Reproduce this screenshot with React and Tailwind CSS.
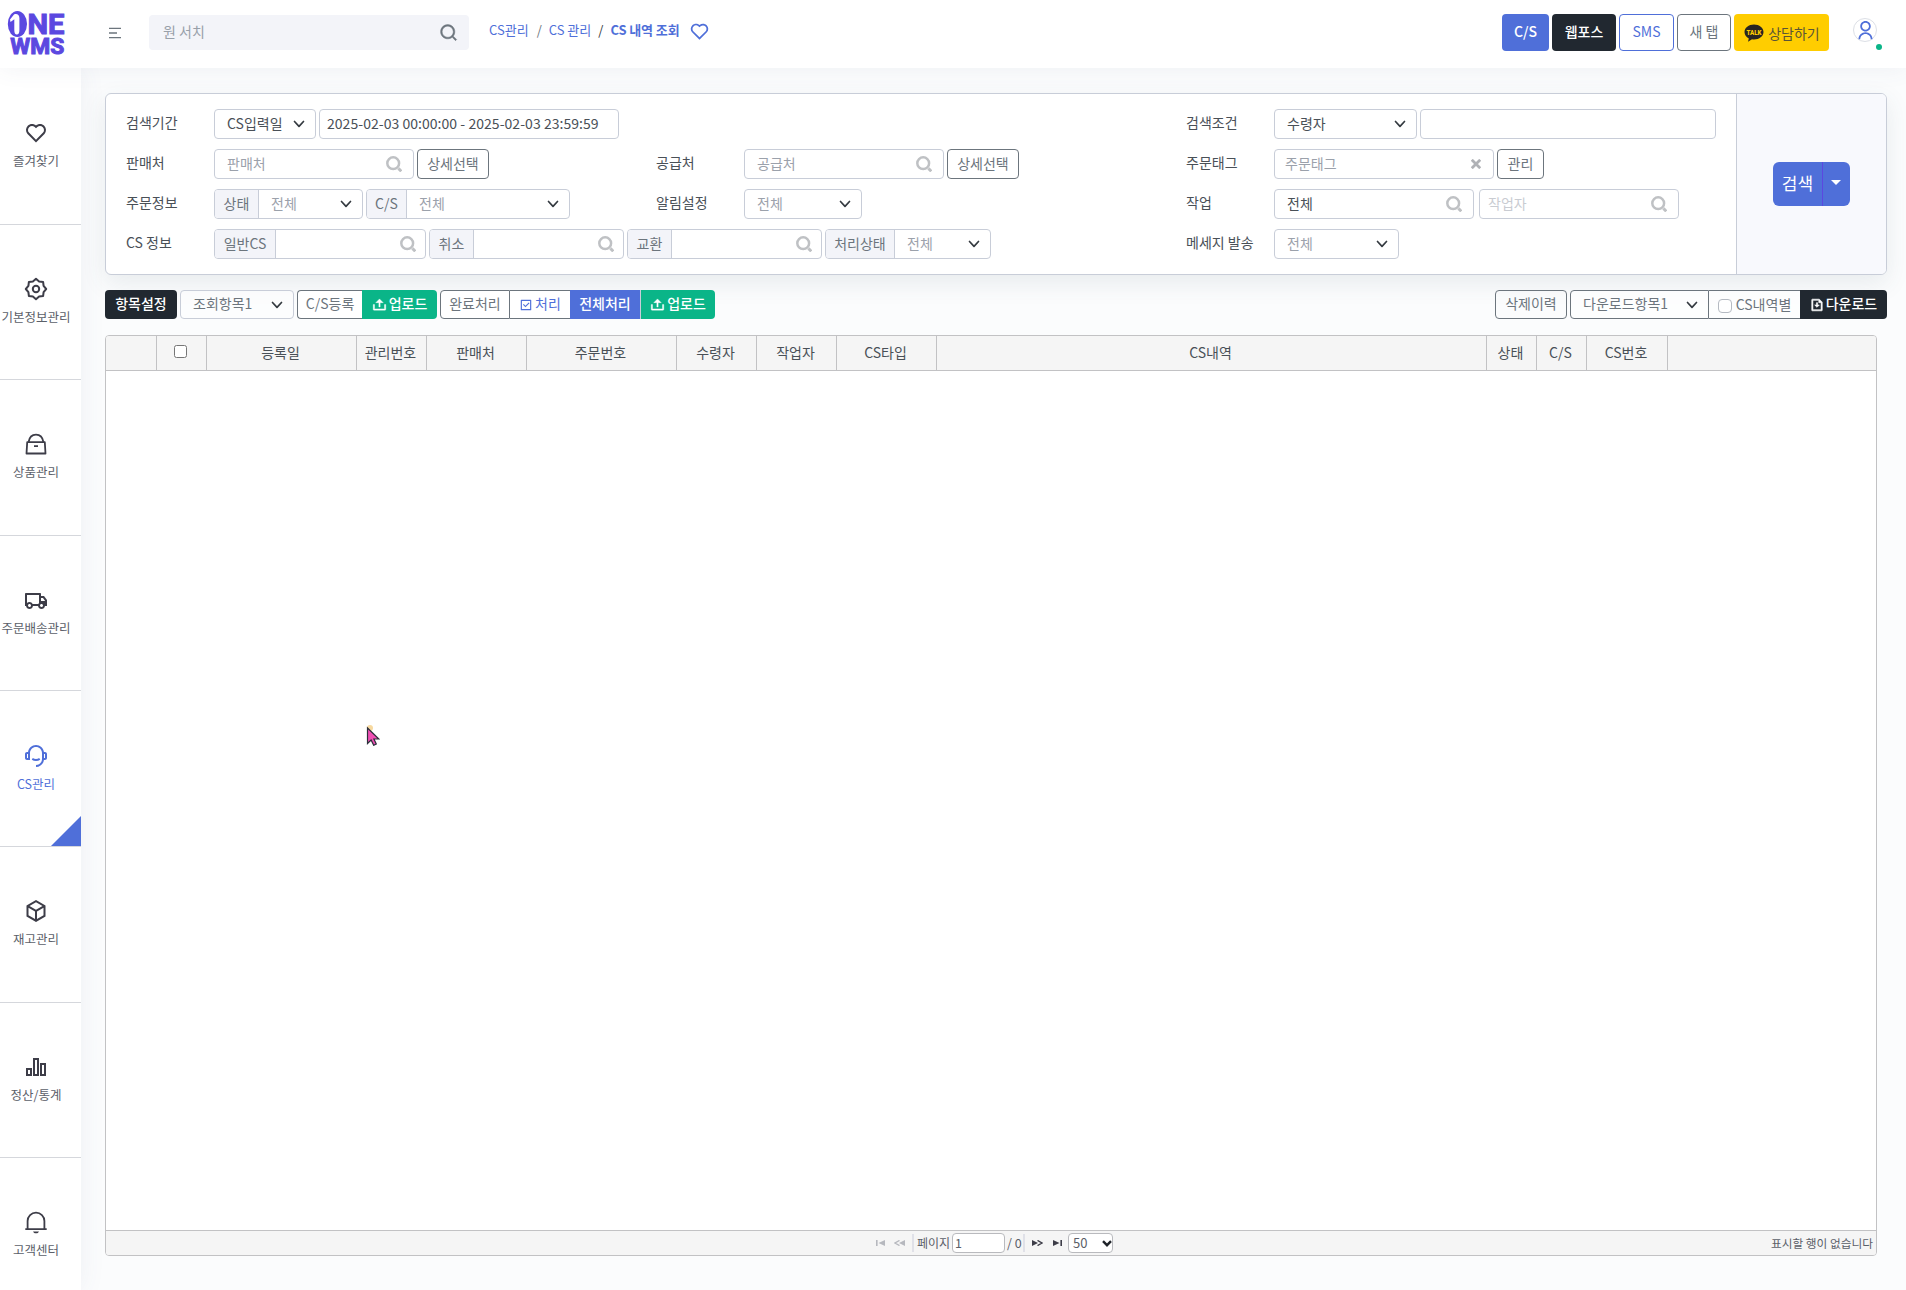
import clsx from "clsx";
import {
  RiBarChart2Line,
  RiBox3Line,
  RiCheckboxLine,
  RiCustomerService2Line,
  RiFileDownloadLine,
  RiHeartLine,
  RiMenu2Line,
  RiSearchLine,
  RiTruckLine,
  RiUpload2Line,
  RiUserLine,
} from "react-icons/ri";

function GearIcon({ className }) {
  return (
    <svg viewBox="0 0 24 24" className={className} fill="none" stroke="currentColor" strokeWidth="2" strokeLinejoin="round">
      <path d="M12 1.800 15.100 4.400l4 .5.500 4L22.200 12l-2.600 3.100-.5 4-4 .5L12 22.200l-3.100-2.600-4-.5-.5-4L1.800 12l2.600-3.100.5-4 4-.5z" />
      <circle cx="12" cy="12" r="3.200" />
    </svg>
  );
}

function BagIcon({ className }) {
  return (
    <svg viewBox="0 0 24 24" className={className} fill="none" stroke="currentColor" strokeWidth="1.800">
      <path d="M3.200 10.200h17.600l.7 11.300h-19z" strokeLinejoin="round" />
      <path d="M4.600 10C5.300 5.500 8.200 2.600 12 2.600s6.700 2.900 7.400 7.400M10 14.200h4" />
    </svg>
  );
}

function BellIcon({ className }) {
  return (
    <svg viewBox="0 0 24 24" className={className} fill="none" stroke="currentColor" strokeWidth="1.800">
      <path d="M3.600 18.700V11a8.400 8.400 0 0 1 16.800 0v7.700M1.300 19.200h21.400" />
      <path d="M9 21.400h6c-.6 1.300-1.600 1.900-3 1.900s-2.400-.6-3-1.900z" fill="currentColor" stroke="none" />
    </svg>
  );
}

const menus = [
  { name: "즐겨찾기", icon: RiHeartLine },
  { name: "기본정보관리", icon: GearIcon },
  { name: "상품관리", icon: BagIcon },
  { name: "주문배송관리", icon: RiTruckLine },
  { name: "CS관리", icon: RiCustomerService2Line, active: true },
  { name: "재고관리", icon: RiBox3Line },
  { name: "정산/통계", icon: RiBarChart2Line },
  { name: "고객센터", icon: BellIcon },
];

const columns = [
  { name: "", width: "w-[51px]" },
  { name: "check", width: "w-[50px]" },
  { name: "등록일", width: "w-[150px]" },
  { name: "관리번호", width: "w-[70px]" },
  { name: "판매처", width: "w-[100px]" },
  { name: "주문번호", width: "w-[150px]" },
  { name: "수령자", width: "w-[80px]" },
  { name: "작업자", width: "w-[80px]" },
  { name: "CS타입", width: "w-[100px]" },
  { name: "CS내역", width: "w-[550px]" },
  { name: "상태", width: "w-[50px]" },
  { name: "C/S", width: "w-[50px]" },
  { name: "CS번호", width: "w-[81px]" },
];

function Logo() {
  return (
    <svg width="60" height="48" viewBox="0 0 60 48" className="shrink-0 overflow-visible">
      <ellipse cx="11.400" cy="14" rx="9.600" ry="13" fill="#5b48e0" />
      <path
        d="M4 9.500 8 4.600c2.600-1.400 5.400.2 5.400 3.400v12c0 3-.9 4.600-2.600 4.600-1.600 0-2.500-1.600-2.500-4.600V9.200L4.500 12z"
        fill="#fff"
      />
      <g
        fill="#5b48e0"
        stroke="#5b48e0"
        strokeWidth="1"
        fontFamily="Roboto, 'Liberation Sans', sans-serif"
        fontWeight="700"
      >
        <text x="21.500" y="23.500" fontSize="28.500" textLength="37" lengthAdjust="spacingAndGlyphs">
          NE
        </text>
        <text x="4.300" y="44" fontSize="22.500" textLength="54" lengthAdjust="spacingAndGlyphs">
          WMS
        </text>
      </g>
    </svg>
  );
}

function Chevron({ className }) {
  return (
    <svg
      viewBox="0 0 12 8"
      className={clsx("h-2 w-3 shrink-0 text-[#343a40]", className)}
      fill="none"
      stroke="currentColor"
      strokeWidth="1.700"
      strokeLinecap="round"
      strokeLinejoin="round"
    >
      <path d="M1.500 1.500 6 6.300l4.500-4.800" />
    </svg>
  );
}

function FieldSearchIcon() {
  return (
    <svg viewBox="0 0 16 16" className="-mr-px ml-auto h-4 w-4 shrink-0 text-[#bfc1c4]" fill="none" stroke="currentColor">
      <circle cx="7.200" cy="7.200" r="5.900" strokeWidth="2.500" />
      <path d="m12.400 12.400 2.900 2.900" strokeWidth="3" />
    </svg>
  );
}

function Select({ value, width, dark }) {
  return (
    <div
      className={clsx(
        "flex h-[30px] items-center justify-between rounded border border-[#c8cdd8] bg-white pr-[10px] pl-3",
        dark ? "text-[#495057]" : "text-[#9ba1ab]",
        width,
      )}
    >
      <span className="pb-0.5 whitespace-nowrap">{value}</span>
      <Chevron />
    </div>
  );
}

function SearchInput({ value, width, className }) {
  return (
    <div
      className={clsx(
        "flex h-[30px] items-center rounded border border-[#c8cdd8] bg-white pr-3 pl-3 whitespace-nowrap text-[#9ba1ab]",
        width,
        className,
      )}
    >
      <span className="pb-0.5">{value}</span>
      <FieldSearchIcon />
    </div>
  );
}

function OutlineButton({ children, width }) {
  return (
    <button
      className={clsx(
        "flex h-[30px] items-center justify-center rounded border border-[#6c757d] bg-white pb-0.5 text-[#6c757d]",
        width,
      )}
    >
      {children}
    </button>
  );
}

function Group({ tag, tagWidth, width, children }) {
  return (
    <div className={clsx("flex h-[30px] overflow-hidden rounded border border-[#c8cdd8] bg-white", width)}>
      <span
        className={clsx(
          "flex shrink-0 items-center justify-center border-r border-[#c8cdd8] bg-[#f3f4f9] pb-0.5 whitespace-nowrap text-[#6c757d]",
          tagWidth,
        )}
      >
        {tag}
      </span>
      <div className="flex flex-1 items-center justify-between pr-[10px] pl-3 text-[#9ba1ab]">{children}</div>
    </div>
  );
}

function Row({ label, children }) {
  return (
    <div className="flex h-[30px] items-center">
      <span className="w-[88px] shrink-0 pb-1 whitespace-nowrap">{label}</span>
      <div className="flex gap-[3px]">{children}</div>
    </div>
  );
}

function Header() {
  return (
    <header className="relative z-20 flex h-[68px] shrink-0 items-start bg-white shadow-[0_0_24px_rgba(80,90,130,0.08)]">
      <div className="flex w-[107px] pt-[10px] pl-[6px]">
        <Logo />
      </div>
      <RiMenu2Line className="mt-[25px] h-4 w-4 text-[#6c757d]" />
      <div className="mt-[15px] ml-[26px] flex h-[35px] w-80 items-center justify-between rounded bg-[#f3f4f9] pr-[11px] pl-[14px] text-[#98a0aa]">
        <span className="pb-1">원 서치</span>
        <RiSearchLine className="h-[19px] w-[19px] text-[#6c757d]" stroke="currentColor" strokeWidth=".6" />
      </div>
      <div className="mt-5 ml-5 flex h-5 items-center text-[13px] whitespace-nowrap text-[#4f6fd9]">
        <span>CS관리</span>
        <span className="mr-[7px] ml-2 text-[#6c757d]">/</span>
        <span>CS 관리</span>
        <span className="mx-[7px] text-[#343a40]">/</span>
        <span className="font-bold tracking-[-0.1px]">CS 내역 조회</span>
        <RiHeartLine className="mt-0.5 ml-[9px] h-[21px] w-[21px]" />
      </div>
      <div className="mt-[14px] ml-auto flex h-[37px] gap-[3px] text-[14px]">
        <button className="w-[47px] rounded bg-[#4f6fd9] pb-[3px] font-medium text-white">C/S</button>
        <button className="w-16 rounded bg-[#212830] pb-[3px] font-medium text-white">웹포스</button>
        <button className="w-[55px] rounded border border-[#4f6fd9] pb-[3px] text-[#4f6fd9]">SMS</button>
        <button className="w-[54px] rounded border border-[#6c757d] pb-[3px] text-[#6c757d]">새 탭</button>
        <button className="flex w-[95px] items-center justify-center gap-1 rounded bg-[#ffcd00] pl-px text-[#5a5437]">
          <svg width="20" height="18" viewBox="0 0 20 18">
            <path
              d="M10 .5c5.300 0 9.500 3.300 9.500 7.500s-4.200 7.500-9.500 7.500c-.7 0-1.400 0-2-.2L4 17.800l.8-3.400C2.200 13.100.5 10.700.5 8 .5 3.800 4.700.5 10 .5z"
              fill="#272522"
            />
            <text
              x="2.500"
              y="10.500"
              fontSize="6.500"
              fontWeight="900"
              fontFamily="Roboto, sans-serif"
              fill="#ffcd00"
              textLength="15"
              lengthAdjust="spacingAndGlyphs"
            >
              TALK
            </text>
          </svg>
          <span>상담하기</span>
        </button>
      </div>
      <div className="relative mt-[18px] mr-[29px] ml-6 flex h-6 w-6 items-center justify-center rounded-full border border-[#dcdfe6]">
        <RiUserLine className="h-[21px] w-[21px] shrink-0 text-[#4f6fd9]" />
        <span className="absolute top-[25px] left-[22px] h-1.5 w-1.5 rounded-full bg-[#0ab588]" />
      </div>
    </header>
  );
}

function Sidebar() {
  return (
    <aside className="z-10 flex w-[81px] shrink-0 flex-col bg-white pt-px shadow-[0_0_24px_rgba(80,90,130,0.08)]">
      {menus.map(({ name, icon: Icon, active }) => (
        <div
          key={name}
          className={clsx(
            "relative flex h-[155.600px] shrink-0 flex-col items-center border-b border-[#d5d7dc] pr-[9px] text-[12.500px] whitespace-nowrap",
            active ? "pt-[53px] text-[#4f6fd9]" : "pt-[52px] text-[#5b6069]",
          )}
        >
          <Icon className={clsx("h-6 w-6", !active && "text-[#3d3d48]")} />
          <span className="mt-[6px] leading-[19px]">{name}</span>
          {active && (
            <span className="absolute right-0 bottom-0 h-[30px] w-[30px] bg-[#4f6fd9] [clip-path:polygon(100%_0,100%_100%,0_100%)]" />
          )}
        </div>
      ))}
    </aside>
  );
}

function SearchPanel() {
  return (
    <section className="flex h-[182px] w-[1782px] shrink-0 overflow-hidden rounded-md border border-[#c8cdd8] bg-white text-[#495057] shadow-[0_8px_24px_rgba(60,90,100,0.1)]">
      <div className="flex w-[1631px] border-r border-[#c8cdd8] pt-[15px] pl-5">
        <div className="flex w-[1060px] flex-col gap-[10px]">
          <Row label="검색기간">
            <Select value="CS입력일" width="w-[102px]" dark />
            <div className="flex h-[30px] w-[300px] items-center rounded border border-[#c8cdd8] bg-white pb-[3px] pl-[7px] tracking-[0.04px] whitespace-nowrap">
              2025-02-03 00:00:00 - 2025-02-03 23:59:59
            </div>
          </Row>
          <div className="flex">
            <div className="w-[530px]">
              <Row label="판매처">
                <SearchInput value="판매처" width="w-[200px]" />
                <OutlineButton width="w-[72px]">상세선택</OutlineButton>
              </Row>
            </div>
            <Row label="공급처">
              <SearchInput value="공급처" width="w-[200px]" />
              <OutlineButton width="w-[72px]">상세선택</OutlineButton>
            </Row>
          </div>
          <div className="flex">
            <div className="w-[530px]">
              <Row label="주문정보">
                <Group tag="상태" tagWidth="w-11" width="w-[149px]">
                  <span className="pb-0.5">전체</span> <Chevron />
                </Group>
                <Group tag="C/S" tagWidth="w-10" width="w-[204px]">
                  <span className="pb-0.5">전체</span> <Chevron />
                </Group>
              </Row>
            </div>
            <Row label="알림설정">
              <Select value="전체" width="w-[118px]" />
            </Row>
          </div>
          <Row label="CS 정보">
            <Group tag="일반CS" tagWidth="w-[61px]" width="w-[212px]">
              <FieldSearchIcon />
            </Group>
            <Group tag="취소" tagWidth="w-11" width="w-[195px]">
              <FieldSearchIcon />
            </Group>
            <Group tag="교환" tagWidth="w-11" width="w-[195px]">
              <FieldSearchIcon />
            </Group>
            <Group tag="처리상태" tagWidth="w-[69px]" width="w-[166px]">
              <span className="pb-0.5">전체</span> <Chevron />
            </Group>
          </Row>
        </div>

        <div className="flex flex-col gap-[10px]">
          <Row label="검색조건">
            <Select value="수령자" width="w-[143px]" dark />
            <div className="h-[30px] w-[296px] rounded border border-[#c8cdd8] bg-white" />
          </Row>
          <Row label="주문태그">
            <div className="flex h-[30px] w-[220px] items-center justify-between rounded border border-[#c8cdd8] bg-white pr-[12px] pl-[10px] text-[#9ba1ab]">
              <span className="pb-0.5">주문태그</span>
              <svg viewBox="0 0 10 10" className="h-[10px] w-[10px] text-[#b0b2b6]" stroke="currentColor" strokeWidth="2.800">
                <path d="m.8.8 8.400 8.400m0-8.400L.8 9.200" />
              </svg>
            </div>
            <OutlineButton width="w-[47px]">관리</OutlineButton>
          </Row>
          <Row label="작업">
            <SearchInput value={<span className="text-[#495057]">전체</span>} width="w-[200px]" />
            <SearchInput
              value={<span className="-ml-1 text-[#c9ccd2]">작업자</span>}
              width="w-[200px]"
              className="ml-0.5"
            />
          </Row>
          <Row label="메세지 발송">
            <Select value="전체" width="w-[125px]" />
          </Row>
        </div>
      </div>
      <div className="flex flex-1 items-center justify-center bg-[#f8f9fd]">
        <div className="flex h-11 w-[77px] overflow-hidden rounded-md bg-[#4f6fd9] text-white">
          <button className="w-[50px] border-r border-[#5b48e0] pb-0.5 text-[17px]">검색</button>
          <button className="flex flex-1 items-center justify-center pr-px pb-1">
            <svg width="10" height="5" viewBox="0 0 10 5" fill="#fff">
              <path d="M0 0h10L5 5z" />
            </svg>
          </button>
        </div>
      </div>
    </section>
  );
}

function Toolbar() {
  return (
    <div className="mt-[15px] flex h-[29px] w-[1782px] shrink-0 justify-between text-[#6c757d]">
      <div className="flex gap-[3px] whitespace-nowrap">
        <button className="w-[72px] rounded bg-[#212830] pb-[3px] font-medium text-white">항목설정</button>
        <div className="flex w-[114px] items-center justify-between rounded border border-[#c8cdd8] bg-white/40 pr-[10px] pl-3">
          <span className="pb-[3px]">조회항목1</span> <Chevron />
        </div>
        <div className="flex">
          <button className="w-[65px] rounded-l border border-r-0 border-[#6c757d] bg-white pb-[3px]">C/S등록</button>
          <button className="flex w-[75px] items-center justify-center gap-[2px] rounded-r bg-[#0ab588] font-medium text-white">
            <RiUpload2Line className="h-[15px] w-[15px]" stroke="currentColor" strokeWidth=".6" />
            <span className="pb-[3px]">업로드</span>
          </button>
        </div>
        <div className="flex">
          <button className="w-[70px] rounded-l border border-[#6c757d] bg-white pb-[3px]">완료처리</button>
          <button className="flex w-[60px] items-center justify-center gap-[2px] border-y border-[#6c757d] bg-white text-[#4f6fd9]">
            <RiCheckboxLine className="h-[14px] w-[14px]" />
            <span className="pb-[3px]">처리</span>
          </button>
          <button className="w-[71px] border-r border-[#c8cdd8] bg-[#4f6fd9] pb-[3px] font-medium text-white">전체처리</button>
          <button className="flex w-[74px] items-center justify-center gap-[2px] rounded-r bg-[#0ab588] font-medium text-white">
            <RiUpload2Line className="h-[15px] w-[15px]" stroke="currentColor" strokeWidth=".6" />
            <span className="pb-[3px]">업로드</span>
          </button>
        </div>
      </div>
      <div className="flex gap-[3px] whitespace-nowrap">
        <button className="w-[72px] rounded border border-[#6c757d] pb-[3px]">삭제이력</button>
        <div className="flex">
          <div className="flex w-[139px] items-center justify-between rounded-l border border-[#6c757d] bg-white/60 pr-[10px] pl-3">
            <span className="pb-[3px]">다운로드항목1</span> <Chevron />
          </div>
          <label className="flex w-[91px] items-center justify-center gap-1 border-y border-[#6c757d] bg-white/60">
            <span className="mt-0.5 h-[14px] w-[14px] rounded-sm border border-[#b5bac2] bg-white" />
            <span className="pb-px">CS내역별</span>
          </label>
          <button className="flex w-[87px] items-center justify-center gap-[2px] rounded-r bg-[#212830] font-medium text-white">
            <RiFileDownloadLine className="h-[14px] w-[14px]" stroke="currentColor" strokeWidth="1" />
            <span className="pb-[3px]">다운로드</span>
          </button>
        </div>
      </div>
    </div>
  );
}

function Pager() {
  return (
    <div className="flex h-[25px] shrink-0 items-center border-t border-[#c2c2c4] bg-[#f5f5f5] text-[12.500px] text-[#5b6069]">
      <div className="flex w-[1010px] items-center pl-[770px]">
        <svg width="9" height="6" viewBox="0 0 9 6" className="shrink-0" fill="#b6b8be">
          <path d="M0 0h1.600v6H0zM9 0v6L2.500 3z" />
        </svg>
        <svg width="11" height="6" viewBox="0 0 11 6" className="ml-[9px] shrink-0" fill="#b6b8be">
          <path d="M11 0v6L5 3z" />
          <path d="M5.500.4 1 3l4.500 2.600" fill="none" stroke="#b6b8be" strokeWidth="1.300" />
        </svg>
        <span className="mr-[3px] ml-[7px] h-[18px] w-0.5 shrink-0 bg-[#e0e1e8]" />
        <span className="w-[35px] shrink-0 text-[12px] whitespace-nowrap">페이지</span>
        <span className="flex h-5 w-[53px] shrink-0 items-center rounded border border-[#b9babe] bg-white pb-px pl-[2px]">1</span>
        <span className="ml-[2px] w-[15px] shrink-0 pb-px whitespace-nowrap">/ 0</span>
        <span className="ml-[1px] h-[18px] w-0.5 shrink-0 bg-[#e0e1e8]" />
        <svg width="11" height="6" viewBox="0 0 11 6" className="ml-[7px] shrink-0" fill="#3d3d48">
          <path d="M0 0v6l6-3z" />
          <path d="M5.500.4 10 3 5.500 5.600" fill="none" stroke="#3d3d48" strokeWidth="1.300" />
        </svg>
        <svg width="9" height="6" viewBox="0 0 9 6" className="ml-[10px] shrink-0" fill="#3d3d48">
          <path d="M0 0v6l6.500-3zM7.400 0H9v6H7.400z" />
        </svg>
        <span className="ml-[6px] flex h-5 w-[45px] shrink-0 items-center justify-between rounded border border-[#b9babe] bg-white pl-1 text-[13px]">
          <span className="pb-px">50</span>
          <svg width="10" height="7" viewBox="0 0 10 7" fill="none" stroke="#1f2329" strokeWidth="2.400">
            <path d="m1 1.200 4 4 4-4" />
          </svg>
        </span>
      </div>
      <span className="ml-auto pr-[3px] text-[11.700px] whitespace-nowrap">표시할 행이 없습니다</span>
    </div>
  );
}

function Grid() {
  return (
    <section className="mt-4 flex h-[921px] w-[1772px] shrink-0 flex-col overflow-hidden rounded border border-[#c2c2c4] bg-white">
      <div className="flex h-[35px] shrink-0 border-b border-[#c2c2c4] bg-[#f5f5f5] text-[#495057]">
        {columns.map((column) => (
          <div
            key={column.name}
            className={clsx(
              "flex shrink-0 items-center justify-center border-r border-[#c2c2c4] pr-0.5 pb-[3px] whitespace-nowrap",
              column.width,
            )}
          >
            {column.name === "check" ? (
              <span className="h-[13px] w-[13px] rounded-[2.500px] border border-[#767676] bg-white" />
            ) : (
              column.name
            )}
          </div>
        ))}
      </div>
      <div className="flex-1" />
      <Pager />
    </section>
  );
}

export default function App() {
  return (
    <div className="relative flex h-[1290px] w-[1906px] flex-col overflow-hidden bg-[#fbfcfd] font-['Noto_Sans_CJK_KR',sans-serif] text-[14px] leading-5">
      <Header />
      <div className="flex min-h-0 flex-1">
        <Sidebar />
        <main className="flex flex-1 flex-col pt-[25px] pl-6">
          <SearchPanel />
          <Toolbar />
          <Grid />
        </main>
      </div>
      <svg width="14" height="22" viewBox="0 0 14 22" className="absolute top-[724px] left-[366px] z-30">
        <circle cx="4" cy="4" r="3" fill="#f7d9a0" />
        <path
          d="M1.500 4v15.500l3.600-3.500 2.600 5.300 2.600-1.300-2.400-5h5z"
          fill="#ef4fb4"
          stroke="#2b2f3a"
          strokeWidth="1.200"
        />
      </svg>
    </div>
  );
}
